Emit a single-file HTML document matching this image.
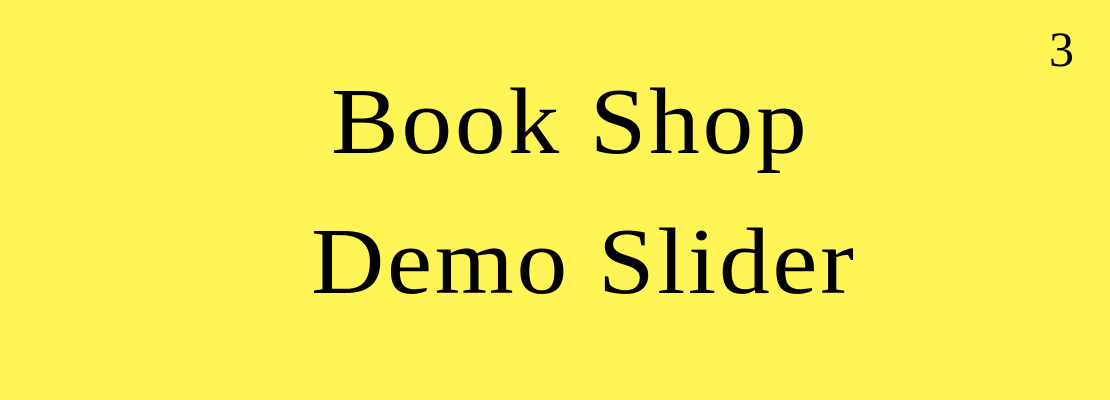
<!DOCTYPE html>
<html><head><style>
html,body{margin:0;padding:0}
body{width:1110px;height:400px;background:#fff557;position:relative;overflow:hidden;font-family:"Liberation Serif",serif;color:#000}
.t{position:absolute;white-space:nowrap;font-size:94px;letter-spacing:2.5px;line-height:1;transform:scaleX(1.08);transform-origin:0 0}
.n{position:absolute;font-size:50px;line-height:1;left:1049px;top:24px}
</style></head><body>
<div class="t" style="left:331px;top:75px">Book Shop</div>
<div class="t" style="left:311px;top:215px">Demo Slider</div>
<div class="n">3</div>
</body></html>
